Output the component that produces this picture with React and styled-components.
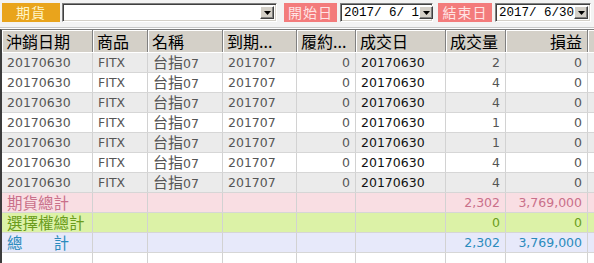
import React from "react";
import styled, { createGlobalStyle } from "styled-components";

const Global = createGlobalStyle`
  html, body { margin: 0; padding: 0; background: #ffffff; }
  body { width: 594px; height: 263px; overflow: hidden; }
  * { box-sizing: border-box; }
`;

const CJK = `"Noto Sans CJK TC", "Noto Sans", sans-serif`;
const NUM = `"DejaVu Sans", Verdana, "Noto Sans CJK TC", sans-serif`;
const MONO = `"Liberation Mono", "Courier New", monospace`;

const Page = styled.div`
  width: 594px;
  height: 263px;
  display: flex;
  flex-direction: column;
  background: #ffffff;
  overflow: hidden;
`;

const Toolbar = styled.div`
  height: 28px;
  display: flex;
  align-items: center;
  padding: 0 0 2px 2px;
  background: #f3f3f3;
  border-bottom: 1px solid #c8c8c8;
`;

const Label = styled.div`
  width: ${(p) => p.$w}px;
  height: 19px;
  margin-left: ${(p) => p.$ml || 0}px;
  display: flex;
  align-items: center;
  justify-content: center;
  font-family: ${CJK};
  font-size: 14px;
  line-height: 17px;
  letter-spacing: 1px;
  color: ${(p) => (p.$tone === "orange" ? "#fff6c8" : "#ffe4e4")};
  background: ${(p) => (p.$tone === "orange" ? "#e9a41c" : "#f37b7b")};
`;

const Combo = styled.div`
  width: ${(p) => p.$w}px;
  height: 19px;
  margin-left: ${(p) => p.$ml || 0}px;
  display: flex;
  align-items: stretch;
  background: #ffffff;
  border: 1px solid;
  border-color: #808080 #ffffff #ffffff #808080;
  box-shadow: inset 1px 1px 0 #404040, inset -1px -1px 0 #d4d0c8;
  padding: 2px;
`;

const ComboText = styled.div`
  flex: 1;
  font-family: ${MONO};
  font-size: 12.5px;
  line-height: 15px;
  color: #000;
  padding-left: 1px;
  white-space: pre;
`;

const ArrowBtn = styled.div`
  width: 14px;
  flex: none;
  display: flex;
  align-items: center;
  justify-content: center;
  background: #d4d0c8;
  border: 1px solid;
  border-color: #ffffff #404040 #404040 #ffffff;
  box-shadow: inset -1px -1px 0 #808080;
`;

const Arrow = () => (
  <svg width="7" height="4" viewBox="0 0 7 4">
    <path d="M0 0H7L3.5 4Z" fill="#000" />
  </svg>
);

const Grid = styled.div`
  flex: 1;
  display: flex;
  flex-direction: column;
  border-left: 2px solid #3c3c3c;
  border-top: 1px solid #7a7a7a;
  margin-top: 1px;
`;

const cols = `91px 55px 75px 74px 59px 90px 60px 82px 6px`;

const HeadRow = styled.div`
  display: grid;
  grid-template-columns: ${cols};
  height: 23px;
  background: #d4d0c8;
  border-bottom: 1px solid #ffffff;
`;

const HeadCell = styled.div`
  display: flex;
  align-items: center;
  justify-content: ${(p) => (p.$right ? "flex-end" : "flex-start")};
  font-family: ${CJK};
  font-size: 16px;
  line-height: 20px;
  color: #000;
  padding: 0 ${(p) => (p.$right ? 5 : 3)}px;
  border-left: 1px solid #ffffff;
  border-right: 1px solid #808080;
  box-shadow: inset 0 1px 0 #ffffff;
  white-space: nowrap;
`;

const ROW_BG = {
  gray: "#ebebeb",
  white: "#ffffff",
  fut: "#f9dee3",
  opt: "#dcf2a7",
  tot: "#e7e9fa",
};

const ROW_FG = {
  gray: "#555555",
  white: "#555555",
  fut: "#c9708a",
  opt: "#6a9c1c",
  tot: "#2b8bbd",
};

const Row = styled.div`
  display: grid;
  grid-template-columns: ${cols};
  height: 20px;
  background: ${(p) => ROW_BG[p.$kind]};
  color: ${(p) => ROW_FG[p.$kind]};
  border-bottom: 1px solid #d6d6d6;
`;

const FillRow = styled(Row)`
  flex: 1;
  height: auto;
  border-bottom: none;
`;

const Cell = styled.div`
  display: flex;
  align-items: center;
  justify-content: ${(p) => (p.$right ? "flex-end" : "flex-start")};
  font-family: ${(p) => (p.$cjk ? CJK : NUM)};
  font-size: ${(p) => (p.$cjk ? "15.5px" : "12.5px")};
  line-height: 17px;
  padding: 0 5px;
  color: ${(p) => (p.$dark ? "#111111" : "inherit")};
  border-right: 1px solid #d2d2d2;
  white-space: nowrap;
  min-width: 0;
`;

const Name = styled.span`
  font-family: ${CJK};
  font-size: 15px;
  line-height: 15px;
`;

const NameNum = styled.span`
  font-family: ${NUM};
  font-size: 12.5px;
  line-height: 15px;
`;

const NameBox = styled.span`
  display: inline-flex;
  align-items: baseline;
`;

const headers = [
  { t: "沖銷日期" },
  { t: "商品" },
  { t: "名稱" },
  { t: "到期..." },
  { t: "履約..." },
  { t: "成交日" },
  { t: "成交量" },
  { t: "損益", right: true },
  { t: "" },
];

const data = [2, 4, 4, 1, 1, 4, 4];

const totals = [
  { kind: "fut", label: "期貨總計", qty: "2,302", pl: "3,769,000" },
  { kind: "opt", label: "選擇權總計", qty: "0", pl: "0" },
  { kind: "tot", label: "總\u3000\u3000計", qty: "2,302", pl: "3,769,000" },
];

export default function App() {
  return (
    <Page>
      <Global />
      <Toolbar>
        <Label $w={58} $tone="orange">期貨</Label>
        <Combo $w={215} $ml={2}>
          <ComboText />
          <ArrowBtn><Arrow /></ArrowBtn>
        </Combo>
        <Label $w={53} $ml={7} $tone="pink">開始日</Label>
        <Combo $w={93} $ml={3}>
          <ComboText>{"2017/ 6/ 1"}</ComboText>
          <ArrowBtn><Arrow /></ArrowBtn>
        </Combo>
        <Label $w={54} $ml={5} $tone="pink">結束日</Label>
        <Combo $w={96} $ml={3}>
          <ComboText>{"2017/ 6/30"}</ComboText>
          <ArrowBtn><Arrow /></ArrowBtn>
        </Combo>
      </Toolbar>
      <Grid>
        <HeadRow>
          {headers.map((h, i) => (
            <HeadCell key={i} $right={h.right}>{h.t}</HeadCell>
          ))}
        </HeadRow>
        {data.map((q, i) => (
          <Row key={i} $kind={i % 2 === 0 ? "gray" : "white"}>
            <Cell>20170630</Cell>
            <Cell>FITX</Cell>
            <Cell>
              <NameBox><Name>台指</Name><NameNum>07</NameNum></NameBox>
            </Cell>
            <Cell>201707</Cell>
            <Cell $right>0</Cell>
            <Cell $dark>20170630</Cell>
            <Cell $right>{q}</Cell>
            <Cell $right>0</Cell>
            <Cell />
          </Row>
        ))}
        {totals.map((t) => (
          <Row key={t.kind} $kind={t.kind}>
            <Cell $cjk>{t.label}</Cell>
            <Cell />
            <Cell />
            <Cell />
            <Cell />
            <Cell />
            <Cell $right>{t.qty}</Cell>
            <Cell $right>{t.pl}</Cell>
            <Cell />
          </Row>
        ))}
        <FillRow $kind="white">
          {Array.from({ length: 9 }).map((_, i) => (
            <Cell key={i} />
          ))}
        </FillRow>
      </Grid>
    </Page>
  );
}
